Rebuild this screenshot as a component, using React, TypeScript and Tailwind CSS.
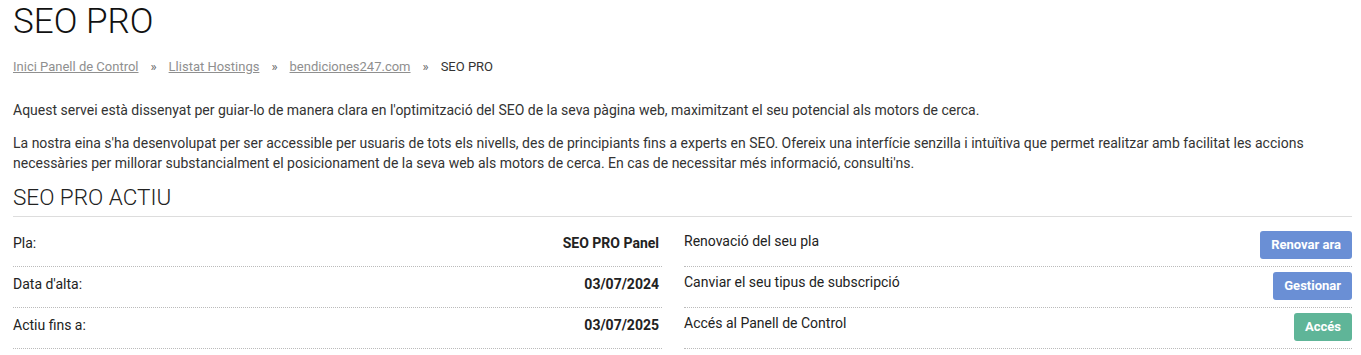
import React from 'react';

const crumbs = [
  { label: 'Inici Panell de Control', link: true },
  { label: 'Llistat Hostings', link: true },
  { label: 'bendiciones247.com', link: true },
  { label: 'SEO PRO', link: false },
];

const details = [
  { label: 'Pla:', value: 'SEO PRO Panel' },
  { label: "Data d'alta:", value: '03/07/2024' },
  { label: 'Actiu fins a:', value: '03/07/2025' },
];

const actions = [
  { label: 'Renovació del seu pla', button: 'Renovar ara', color: 'bg-[#6a8fd5]' },
  { label: 'Canviar el seu tipus de subscripció', button: 'Gestionar', color: 'bg-[#6a8fd5]' },
  { label: 'Accés al Panell de Control', button: 'Accés', color: 'bg-[#5fb598]' },
];

export default function App() {
  return (
    <div className="min-h-[355px] bg-white pl-[13px] pr-[9px] text-[#333]" style={{ fontFamily: 'Roboto, "Liberation Sans", sans-serif' }}>
      {/* Title */}
      <h1 className="pt-px text-[35px] font-light leading-[42px] text-[#111]">SEO PRO</h1>

      {/* Breadcrumb */}
      <div className="mt-[15px] flex items-center text-[13px] leading-[18px]">
        {crumbs.map((c, i) => (
          <span key={c.label} className="flex items-center">
            {i > 0 && <span className="mx-[12px] text-[#666]">»</span>}
            {c.link ? (
              <a className="text-[#8f8f8f] underline">{c.label}</a>
            ) : (
              <span className="text-[#333]">{c.label}</span>
            )}
          </span>
        ))}
      </div>

      {/* Intro */}
      <p className="mt-[24px] text-[14px] leading-[20px]">
        Aquest servei està dissenyat per guiar-lo de manera clara en l'optimització del SEO de la seva pàgina web, maximitzant el seu potencial als motors de cerca.
      </p>
      <p className="mt-[13px] text-[14px] leading-[20px]">
        La nostra eina s'ha desenvolupat per ser accessible per usuaris de tots els nivells, des de principiants fins a experts en SEO. Ofereix una interfície senzilla i intuïtiva que permet realitzar amb facilitat les accions necessàries per millorar substancialment el posicionament de la seva web als motors de cerca. En cas de necessitar més informació, consulti'ns.
      </p>

      {/* Section */}
      <h2 className="mt-[9px] border-b border-[#dddddd] pb-[4px] text-[22.5px] font-light leading-[30px] text-[#222]">SEO PRO ACTIU</h2>

      <div className="mt-[9px] flex gap-[22px] text-[14px] leading-[20px] text-[#222]">
        <div className="w-[649px]">
          {details.map((d) => (
            <div key={d.label} className="flex justify-between border-b border-dotted border-[#bbb] pt-[7px] pb-[13px] pr-[3px]">
              <span>{d.label}</span>
              <span className="font-bold">{d.value}</span>
            </div>
          ))}
        </div>
        <div className="flex-1">
          {actions.map((a) => (
            <div key={a.label} className="flex items-start justify-between border-b border-dotted border-[#bbb] pt-[5px] pb-[7px]">
              <span>{a.label}</span>
              <button className={`${a.color} h-[28px] rounded-[3px] px-[11px] text-[13px] font-bold text-white`}>
                {a.button}
              </button>
            </div>
          ))}
        </div>
      </div>
    </div>
  );
}
